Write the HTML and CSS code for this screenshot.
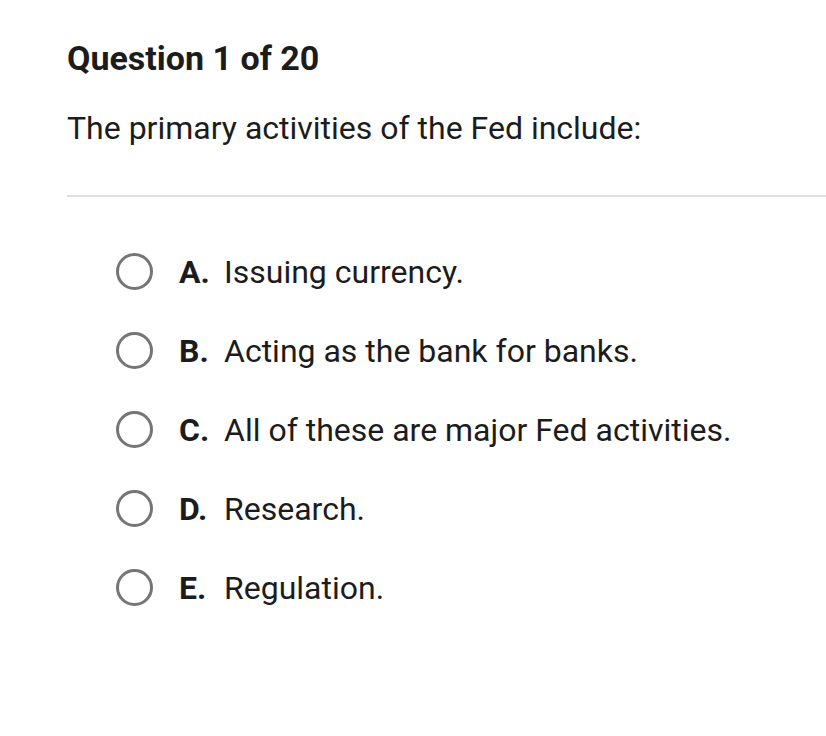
FILE: index.html
```html
<!DOCTYPE html>
<html lang="en">
<head>
    <meta charset="UTF-8">
    <title>Question 1 of 20</title>
    <link rel="stylesheet" href="styles.css">
</head>
<body>

<div class="quiz">
    <h1 class="quiz-title">Question 1 of 20</h1>
    <p class="quiz-prompt">The primary activities of the Fed include:</p>
    <hr class="quiz-divider">

    <ul class="choices">
        <li class="choice"><span class="radio"></span><span class="letter">A.</span><span class="answer">Issuing currency.</span></li>
        <li class="choice"><span class="radio"></span><span class="letter">B.</span><span class="answer">Acting as the bank for banks.</span></li>
        <li class="choice"><span class="radio"></span><span class="letter">C.</span><span class="answer">All of these are major Fed activities.</span></li>
        <li class="choice"><span class="radio"></span><span class="letter">D.</span><span class="answer">Research.</span></li>
        <li class="choice"><span class="radio"></span><span class="letter">E.</span><span class="answer">Regulation.</span></li>
    </ul>
</div>

</body>
</html>
```

FILE: styles.css
```css
body {
    margin: 0;
    background: #fff;
    font-family: Roboto, "Liberation Sans", sans-serif;
    color: #1c1c1c;
}
.quiz {
    padding: 36px 0 0 67px;
}
.quiz-title {
    margin: 0;
    font-size: 34px;
    font-weight: 700;
    line-height: 44px;
}
.quiz-prompt {
    margin: 26px 0 0;
    font-size: 32px;
    line-height: 44px;
}
.quiz-divider {
    margin: 45px 0 0;
    border: none;
    height: 2px;
    background: #e0e0e0;
}
.choices {
    list-style: none;
    margin: 0;
    padding: 35px 0 0 49px;
}
.choice {
    display: flex;
    align-items: center;
    height: 79px;
    font-size: 32px;
}
.radio {
    width: 31px;
    height: 31px;
    border: 3px solid #757575;
    border-radius: 50%;
    flex-shrink: 0;
}
.letter {
    font-weight: 700;
    margin-left: 26px;
    width: 45px;
}
```
